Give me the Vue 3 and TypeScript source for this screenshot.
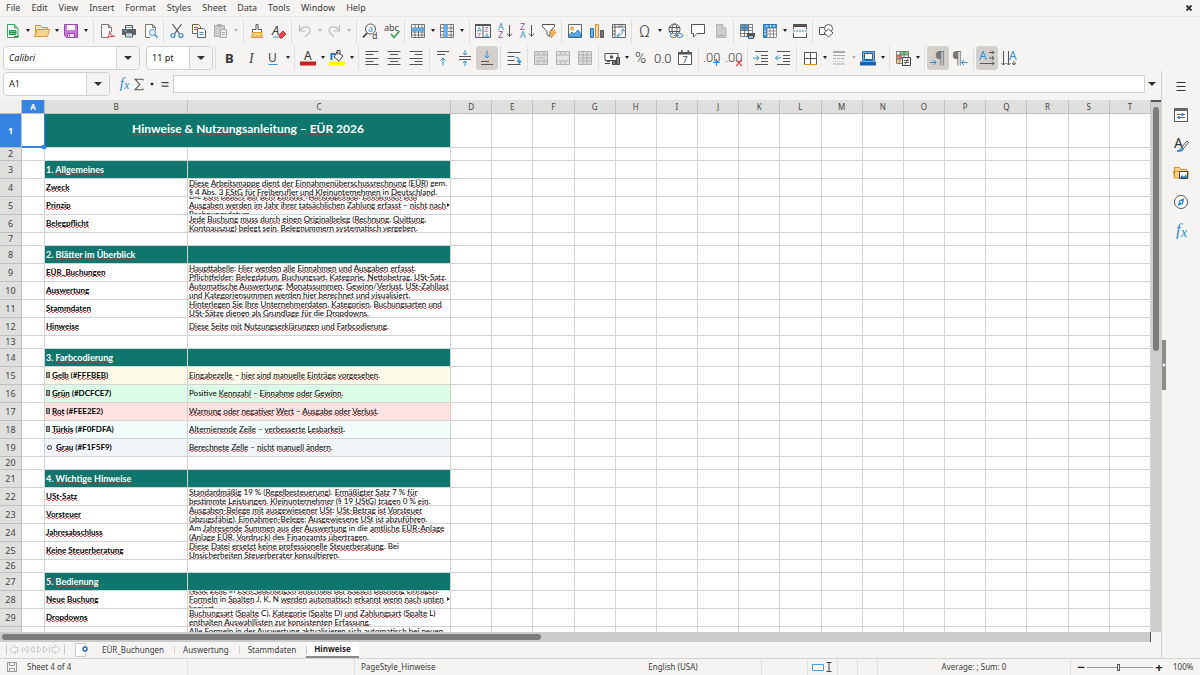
<script setup lang="ts">
import { ref } from 'vue'

interface Tool { id: string; label: string; drop?: boolean; on?: boolean; dim?: boolean }
interface Row {
  n: number
  kind: 'title' | 'gap' | 'section' | 'item'
  label?: string
  lines?: string[]
  tone?: string
  mark?: 'box' | 'ring'
  more?: boolean
}
interface Piece { text: string; bad: boolean }

const menus = ['File', 'Edit', 'View', 'Insert', 'Format', 'Styles', 'Sheet', 'Data', 'Tools', 'Window', 'Help']

const standardBar: Tool[][] = [
  [{ id: 'new', label: 'New', drop: true }, { id: 'open', label: 'Open', drop: true }, { id: 'save', label: 'Save', drop: true }],
  [{ id: 'pdf', label: 'Export as PDF' }, { id: 'print', label: 'Print' }, { id: 'preview', label: 'Print preview' }],
  [{ id: 'cut', label: 'Cut' }, { id: 'copy', label: 'Copy' }, { id: 'paste', label: 'Paste', drop: true, dim: true }],
  [{ id: 'brush', label: 'Clone formatting' }, { id: 'clear', label: 'Clear formatting' }],
  [{ id: 'undo', label: 'Undo', drop: true, dim: true }, { id: 'redo', label: 'Redo', drop: true, dim: true }],
  [{ id: 'find', label: 'Find and replace' }, { id: 'spell', label: 'Spelling' }],
  [{ id: 'row', label: 'Row', drop: true }, { id: 'column', label: 'Column', drop: true }],
  [{ id: 'sort', label: 'Sort' }, { id: 'asc', label: 'Sort ascending' }, { id: 'desc', label: 'Sort descending' }, { id: 'filter', label: 'AutoFilter' }],
  [{ id: 'image', label: 'Insert image' }, { id: 'chart', label: 'Insert chart' }, { id: 'pivot', label: 'Insert pivot table' }],
  [{ id: 'omega', label: 'Special character', drop: true }, { id: 'link', label: 'Hyperlink' }, { id: 'comment', label: 'Comment' }, { id: 'page', label: 'Headers and footers', dim: true }],
  [{ id: 'area', label: 'Print area' }, { id: 'freeze', label: 'Freeze rows and columns', drop: true }, { id: 'split', label: 'Split window' }],
  [{ id: 'shapes', label: 'Draw functions' }],
]

const formatBar: Tool[][] = [
  [{ id: 'bold', label: 'Bold' }, { id: 'italic', label: 'Italic' }, { id: 'underline', label: 'Underline', drop: true }],
  [{ id: 'fontcolor', label: 'Font color', drop: true }, { id: 'fill', label: 'Background color', drop: true }],
  [{ id: 'left', label: 'Align left' }, { id: 'center', label: 'Center horizontally' }, { id: 'right', label: 'Align right' }],
  [{ id: 'top', label: 'Align top' }, { id: 'middle', label: 'Center vertically' }, { id: 'bottom', label: 'Align bottom', on: true }],
  [{ id: 'wrap', label: 'Wrap text' }],
  [{ id: 'mergecenter', label: 'Merge and center', dim: true }, { id: 'merge', label: 'Merge cells', dim: true }, { id: 'unmerge', label: 'Unmerge cells', dim: true }],
  [{ id: 'currency', label: 'Format as currency', drop: true }, { id: 'percent', label: 'Format as percent' }, { id: 'number', label: 'Format as number' }, { id: 'date', label: 'Format as date' }],
  [{ id: 'adddec', label: 'Add decimal place' }, { id: 'deldec', label: 'Delete decimal place' }],
  [{ id: 'indent', label: 'Increase indent' }, { id: 'outdent', label: 'Decrease indent' }],
  [{ id: 'borders', label: 'Borders', drop: true }, { id: 'borderstyle', label: 'Border style', drop: true, dim: true }, { id: 'bordercolor', label: 'Border color', drop: true }],
  [{ id: 'conditional', label: 'Conditional formatting', drop: true }],
  [{ id: 'ltr', label: 'Left to right', on: true }, { id: 'rtl', label: 'Right to left' }],
  [{ id: 'horizontal', label: 'Text direction left to right', on: true }, { id: 'vertical', label: 'Text direction top to bottom' }],
]

const panels = [
  { id: 'menu', label: 'Sidebar settings' },
  { id: 'properties', label: 'Properties' },
  { id: 'styles', label: 'Styles' },
  { id: 'gallery', label: 'Gallery' },
  { id: 'navigator', label: 'Navigator' },
  { id: 'functions', label: 'Functions' },
]

const columns = 'DEFGHIJKLMNOPQRST'.split('')

const rows: Row[] = [
  { n: 1, kind: 'title', label: 'Hinweise & Nutzungsanleitung – EÜR 2026' },
  { n: 2, kind: 'gap' },
  { n: 3, kind: 'section', label: '1. Allgemeines' },
  { n: 4, kind: 'item', label: 'Zweck', lines: ['Diese Arbeitsmappe dient der Einnahmenüberschussrechnung (EÜR) gem.', '§ 4 Abs. 3 EStG für Freiberufler und Kleinunternehmen in Deutschland.'] },
  { n: 5, kind: 'item', label: 'Prinzip', more: true, lines: ['Die EÜR basiert auf dem Zufluss-/Abflussprinzip: Einnahmen und', 'Ausgaben werden im Jahr ihrer tatsächlichen Zahlung erfasst – nicht nach', 'Rechnungsdatum.'] },
  { n: 6, kind: 'item', label: 'Belegpflicht', lines: ['Jede Buchung muss durch einen Originalbeleg (Rechnung, Quittung,', 'Kontoauszug) belegt sein. Belegnummern systematisch vergeben.'] },
  { n: 7, kind: 'gap' },
  { n: 8, kind: 'section', label: '2. Blätter im Überblick' },
  { n: 9, kind: 'item', label: 'EÜR_Buchungen', lines: ['Haupttabelle: Hier werden alle Einnahmen und Ausgaben erfasst.', 'Pflichtfelder: Belegdatum, Buchungsart, Kategorie, Nettobetrag, USt-Satz.'] },
  { n: 10, kind: 'item', label: 'Auswertung', lines: ['Automatische Auswertung: Monatssummen, Gewinn/Verlust, USt-Zahllast', 'und Kategoriensummen werden hier berechnet und visualisiert.'] },
  { n: 11, kind: 'item', label: 'Stammdaten', lines: ['Hinterlegen Sie Ihre Unternehmerdaten, Kategorien, Buchungsarten und', 'USt-Sätze dienen als Grundlage für die Dropdowns.'] },
  { n: 12, kind: 'item', label: 'Hinweise', lines: ['Diese Seite mit Nutzungserklärungen und Farbcodierung.'] },
  { n: 13, kind: 'gap' },
  { n: 14, kind: 'section', label: '3. Farbcodierung' },
  { n: 15, kind: 'item', label: 'Gelb (#FFFBEB)', mark: 'box', tone: 'yellow', lines: ['Eingabezelle – hier sind manuelle Einträge vorgesehen.'] },
  { n: 16, kind: 'item', label: 'Grün (#DCFCE7)', mark: 'box', tone: 'green', lines: ['Positive Kennzahl – Einnahme oder Gewinn.'] },
  { n: 17, kind: 'item', label: 'Rot (#FEE2E2)', mark: 'box', tone: 'red', lines: ['Warnung oder negativer Wert – Ausgabe oder Verlust.'] },
  { n: 18, kind: 'item', label: 'Türkis (#F0FDFA)', mark: 'box', tone: 'mint', lines: ['Alternierende Zeile – verbesserte Lesbarkeit.'] },
  { n: 19, kind: 'item', label: 'Grau (#F1F5F9)', mark: 'ring', tone: 'grey', lines: ['Berechnete Zelle – nicht manuell ändern.'] },
  { n: 20, kind: 'gap' },
  { n: 21, kind: 'section', label: '4. Wichtige Hinweise' },
  { n: 22, kind: 'item', label: 'USt-Satz', lines: ['Standardmäßig 19 % (Regelbesteuerung). Ermäßigter Satz 7 % für', 'bestimmte Leistungen. Kleinunternehmer (§ 19 UStG) tragen 0 % ein.'] },
  { n: 23, kind: 'item', label: 'Vorsteuer', lines: ['Ausgaben-Belege mit ausgewiesener USt: USt-Betrag ist Vorsteuer', '(abzugsfähig). Einnahmen-Belege: Ausgewiesene USt ist abzuführen.'] },
  { n: 24, kind: 'item', label: 'Jahresabschluss', lines: ['Am Jahresende Summen aus der Auswertung in die amtliche EÜR-Anlage', '(Anlage EÜR, Vordruck) des Finanzamts übertragen.'] },
  { n: 25, kind: 'item', label: 'Keine Steuerberatung', lines: ['Diese Datei ersetzt keine professionelle Steuerberatung. Bei', 'Unsicherheiten Steuerberater konsultieren.'] },
  { n: 26, kind: 'gap' },
  { n: 27, kind: 'section', label: '5. Bedienung' },
  { n: 28, kind: 'item', label: 'Neue Buchung', more: true, lines: ['Neue Zeile in EÜR_Buchungen unterhalb der letzten Buchung einfügen.', 'Formeln in Spalten J, K, N werden automatisch erkannt wenn nach unten', 'kopiert.'] },
  { n: 29, kind: 'item', label: 'Dropdowns', lines: ['Buchungsart (Spalte C), Kategorie (Spalte D) und Zahlungsart (Spalte L)', 'enthalten Auswahllisten zur konsistenten Erfassung.'] },
  { n: 30, kind: 'item', lines: ['Alle Formeln in der Auswertung aktualisieren sich automatisch bei neuen', 'Buchungen.'] },
]

// Words the English dictionary accepts, so they carry no spelling mark.
const accepted = new Set(['in', 'die', 'Die', 'Am', 'Bei', 'Positive', 'Abs', 'des', 'J', 'K', 'N', 'C', 'D', 'L', 'gem'])

function pieces(text: string): Piece[] {
  return (text.match(/[\p{L}\p{N}_-]+|[^\p{L}\p{N}_-]+/gu) ?? []).map((part) => ({
    text: part,
    bad: /^\p{L}/u.test(part) && !/\d/.test(part) && !accepted.has(part),
  }))
}

const tabs = ['EÜR_Buchungen', 'Auswertung', 'Stammdaten', 'Hinweise']
const activeTab = ref('Hinweise')
const fontName = ref('Calibri')
const fontSize = ref('11 pt')
const cellName = ref('A1')
const formula = ref('')
const zoom = ref(48)
</script>

<template>
  <div class="app">
    <svg class="sprites" aria-hidden="true">
      <symbol id="i-new" viewBox="0 0 16 16"><path d="M2.500 1.500h7l3.500 3.500v9.500h-10.500z" fill="#fff" stroke="#3aa655" /><path d="M9.500 1.500v3.500h3.500" fill="#8fd3a0" stroke="#3aa655" /><path d="M4.500 7.500h6.500v4h-6.500z" fill="#7cc88d" stroke="#2f8f48" /><path d="M4.500 9.500h6.500M9 13.500h5" stroke="#2f8f48" /></symbol>
      <symbol id="i-open" viewBox="0 0 16 16"><path d="M1.500 13V2.500h5l1.500 2h5.500V6" fill="#fbe3ba" stroke="#d99030" /><path d="M.5 13.500 3 6.500h12.500L13.500 13.500z" fill="#fcd28c" stroke="#e09a38" /></symbol>
      <symbol id="i-save" viewBox="0 0 16 16"><path d="M1.500 1.500h13v13H3.500l-2-2z" fill="#c57bd4" stroke="#9a45ab" /><path d="M4 2h8v5H4z" fill="#fff" /><path d="M4.500 10.500h7v4h-7z" fill="#f2dff5" stroke="#9a45ab" /><path d="M6.500 11.500v2" stroke="#9a45ab" /></symbol>
      <symbol id="i-pdf" viewBox="0 0 16 16"><path d="M8 14.500H2.500v-13h7l3 3V9M9.500 1.500v3h3" fill="#fafafa" stroke="#777" /><path d="M8 15c2-2 3-4.500 2.500-7 .5 3 2 5 5 5.500-3-.5-5 0-7.500 1.500z" fill="none" stroke="#e0383c" /></symbol>
      <symbol id="i-print" viewBox="0 0 16 16"><path d="M4.500 6V2.500h7V6" fill="#fff" stroke="#555" /><path d="M1 6h14v6H1z" fill="#5d6265" /><path d="M4.500 10h7v4h-7z" fill="#fff" stroke="#555" /><path d="M3 8h3" stroke="#63b0e8" /><path d="M5.500 12h5M5 4.500h6" stroke="#63b0e8" /></symbol>
      <symbol id="i-preview" viewBox="0 0 16 16"><path d="M7 14.500H2.500v-13h7l3 3V7M9.500 1.500v3h3" fill="#fafafa" stroke="#777" /><circle cx="9.500" cy="9.500" r="3" fill="#e4f1fb" stroke="#3a93d6" /><path d="m11.500 11.500 3 3" stroke="#3a93d6" stroke-width="1.400" /></symbol>
      <symbol id="i-cut" viewBox="0 0 16 16"><path d="M3.500 1 10.500 11M12.500 1 5.500 11" stroke="#555" stroke-width="1.200" /><circle cx="4" cy="12.500" r="2" fill="none" stroke="#2f8fd6" stroke-width="1.200" /><circle cx="12" cy="12.500" r="2" fill="none" stroke="#2f8fd6" stroke-width="1.200" /></symbol>
      <symbol id="i-copy" viewBox="0 0 16 16"><path d="M1.500 1.500h6l2 2v7h-8z" fill="#fff" stroke="#666" /><path d="M6.500 5.500h6l2 2v7h-8z" fill="#fff" stroke="#666" /><path d="M3 4.500h4M3 6.500h3M8.500 9.500h4M8.500 11.500h4" stroke="#2f8fd6" /></symbol>
      <symbol id="i-paste" viewBox="0 0 16 16"><path d="M1.500 2.500h10v11h-10z" fill="#ccc" stroke="#aaa" /><path d="M4.500 1h4v3h-4z" fill="#aaa" /><path d="M7.500 6.500h6v8h-6z" fill="#eee" stroke="#aaa" /><path d="M9 9.500h3M9 11.500h3" stroke="#aaa" /></symbol>
      <symbol id="i-brush" viewBox="0 0 16 16"><path d="M7 1.500h2v5h3.500v3h-9v-3H7z" fill="#fff" stroke="#555" /><path d="M3.500 9.500h9l1 5h-11z" fill="#fcd28c" stroke="#e09a38" /><path d="M5 12v2M8 12v2M11 12v2" stroke="#e09a38" /></symbol>
      <symbol id="i-clear" viewBox="0 0 16 16"><text x="1" y="12" font-size="13" font-style="italic" fill="#444">A</text><path d="M2 14h6" stroke="#3a93d6" /><path d="m8 12 4-4 3 3-4 4h-2z" fill="#e5484d" stroke="#c6353a" /></symbol>
      <symbol id="i-undo" viewBox="0 0 16 16"><path d="M2.500 2v6h6M2.500 8C6 2 13 3 13 7.500c0 3-3 4-5 6.500" fill="none" stroke="#bdbdbd" stroke-width="1.200" /></symbol>
      <symbol id="i-redo" viewBox="0 0 16 16"><path d="M13.500 2v6h-6M13.500 8C10 2 3 3 3 7.500c0 3 3 4 5 6.500" fill="none" stroke="#bdbdbd" stroke-width="1.200" /></symbol>
      <symbol id="i-find" viewBox="0 0 16 16"><circle cx="8.500" cy="6" r="5" fill="#fff" stroke="#555" /><path d="M5 10 1 14.500" stroke="#444" stroke-width="1.800" /><text x="6" y="9" font-size="9" fill="#2f8fd6">a</text><text x="10" y="15.500" font-size="9" fill="#444">d</text></symbol>
      <symbol id="i-spell" viewBox="0 0 16 16"><text x="0" y="8" font-size="9" fill="#444">abc</text><path d="m7 11 3 3.500L15.500 8" fill="none" stroke="#35a355" stroke-width="1.600" /></symbol>
      <symbol id="i-row" viewBox="0 0 16 16"><path d="M1.500 1.500h13v13h-13zM1.500 5h13M1.500 9h13M1.500 12h13M5 1.500v13M8.500 1.500v13M12 1.500v13" fill="#fff" stroke="#555" stroke-width=".8" /><path d="M1.500 5h13v3.500h-13z" fill="#5aacea" /></symbol>
      <symbol id="i-column" viewBox="0 0 16 16"><path d="M1.500 1.500h13v13h-13zM1.500 5h13M1.500 8.500h13M1.500 12h13M5 1.500v13M8.500 1.500v13M12 1.500v13" fill="#fff" stroke="#555" stroke-width=".8" /><path d="M5 1.500h4v13H5z" fill="#69b3ea" /></symbol>
      <symbol id="i-sort" viewBox="0 0 16 16"><path d="M.5 1.500h15v13H.5zM8 2v12" fill="#fff" stroke="#555" /><path d="M0 1h16v2H0z" fill="#555" /><text x="2" y="8.500" font-size="7" fill="#2f8fd6">A</text><text x="2" y="14.500" font-size="7" fill="#a34bb5">Z</text><text x="9.500" y="8.500" font-size="7" fill="#a34bb5">Z</text><text x="9.500" y="14.500" font-size="7" fill="#2f8fd6">A</text></symbol>
      <symbol id="i-asc" viewBox="0 0 16 16"><text x="1" y="7" font-size="9" fill="#2f8fd6">A</text><text x="1" y="15" font-size="9" fill="#a34bb5">Z</text><path d="M12.500 2v11M10 10.500l2.500 3 2.500-3" fill="none" stroke="#555" /></symbol>
      <symbol id="i-desc" viewBox="0 0 16 16"><text x="1" y="7" font-size="9" fill="#a34bb5">Z</text><text x="1" y="15" font-size="9" fill="#2f8fd6">A</text><path d="M12.500 2v11M10 10.500l2.500 3 2.500-3" fill="none" stroke="#555" /></symbol>
      <symbol id="i-filter" viewBox="0 0 16 16"><path d="M1.500 1.500h12v2L9 8.500v5l-3 -2V8.500l-4.500-5z" fill="#fff" stroke="#555" /><path d="m11 7-2 4h2.500l-1.500 4 5-5.500h-2.500l1.500-2.500z" fill="#fbbf72" stroke="#e58a1f" stroke-width=".8" /></symbol>
      <symbol id="i-image" viewBox="0 0 16 16"><path d="M1.500 1.500h13v13h-13z" fill="#fff" stroke="#666" /><circle cx="5" cy="5.500" r="1.500" fill="#fcd28c" stroke="#e08a20" /><path d="m2 14 0-2 3-3 2 2 4-4 3 4v3z" fill="#5aa9e6" stroke="#2576b9" stroke-width=".8" /></symbol>
      <symbol id="i-chart" viewBox="0 0 16 16"><path d="M1.500 5.500h3v9h-3z" fill="#69b3ea" stroke="#2576b9" /><path d="M6.500 1.500h3v13h-3z" fill="#fcd9a4" stroke="#e58a1f" /><path d="M11.500 7.500h3v7h-3z" fill="#777" stroke="#555" /></symbol>
      <symbol id="i-pivot" viewBox="0 0 16 16"><path d="M1.500 1.500h13v13h-13zM1.500 4h13M4 1.500v13M8 1.500v3M11 1.500v3M1.500 8h3M1.500 11h3" fill="#fff" stroke="#666" /><path d="M6 12.500c4 0 6-2 6-6M10 8.500l2-2.500 2 2.500M8.500 10l-2.500 2.500 2.500 2" fill="none" stroke="#2f8fd6" /></symbol>
      <symbol id="i-omega" viewBox="0 0 16 16"><text x="2" y="14" font-size="17" class="thin" fill="#444">Ω</text></symbol>
      <symbol id="i-link" viewBox="0 0 16 16"><circle cx="7.500" cy="6.500" r="5.500" fill="#fff" stroke="#555" /><ellipse cx="7.500" cy="6.500" rx="2.500" ry="5.500" fill="none" stroke="#555" /><path d="M2 4.500h11M2 8.500h11" stroke="#555" /><rect x="3.500" y="10.500" width="6" height="4" rx="2" fill="#f5f4f2" stroke="#2f8fd6" /><rect x="9.500" y="10.500" width="6" height="4" rx="2" fill="#f5f4f2" stroke="#2f8fd6" /><path d="M7 12.500h5" stroke="#2f8fd6" /></symbol>
      <symbol id="i-comment" viewBox="0 0 16 16"><path d="M1.500 1.500h13v9H7L3.500 14v-3.500h-2z" fill="#fff" stroke="#555" /></symbol>
      <symbol id="i-page" viewBox="0 0 16 16"><path d="M3.500 1.500h6l3.500 3.500v9.500H3.500z" fill="#ccc" stroke="#b5b5b5" /><path d="M9.500 1.500v3.500H13" fill="#eee" stroke="#b5b5b5" /><path d="M5 12.500h6" stroke="#aaa" /></symbol>
      <symbol id="i-area" viewBox="0 0 16 16"><path d="M1.500 1.500h12v12h-12z" fill="#fff" /><path d="M2 1.500h8v6H2z" fill="#4b9fe0" /><path d="M1.500 1.500h12v12h-12zM1.500 4.500h12M1.500 7.500h12M1.500 10.500h12M5.500 1.500v12M9.500 1.500v12" fill="none" stroke="#666" stroke-width=".8" /><path d="M8 10h8v4H8z" fill="#555" /><path d="M9.500 12.500h5v3h-5z" fill="#8cc7f2" stroke="#555" /></symbol>
      <symbol id="i-freeze" viewBox="0 0 16 16"><path d="M5 5h9.500v9.500H5zM5 8h9.500M5 11h9.500M8 5v9.500M11.500 5v9.500" fill="#fff" stroke="#777" stroke-width=".8" /><path d="M1.500 1.500h13v3h-10v10h-3z" fill="#4b9fe0" stroke="#2576b9" /><path d="M5 2v2.500M8.500 2v2.500M12 2v2.500M2 8h2.500M2 11h2.500" stroke="#d8ecfa" /></symbol>
      <symbol id="i-split" viewBox="0 0 16 16"><path d="M1.500 6V1.500h13V6M1.500 10v4.500h13V10" fill="#fff" stroke="#555" /><path d="M1 1h14v3H1z" fill="#555" /><path d="M1 8h14" stroke="#2f8fd6" stroke-dasharray="2 1" /></symbol>
      <symbol id="i-shapes" viewBox="0 0 16 16"><path d="M1.500 4.500h8v7h-8z" fill="#fff" stroke="#555" /><circle cx="10.500" cy="5.500" r="4" fill="#fff" stroke="#555" /><path d="m10.500 6 4.500 4-4.500 4L6 10z" fill="#fff" stroke="#555" /></symbol>

      <symbol id="i-bold" viewBox="0 0 16 16"><text x="4" y="13" font-size="13" font-weight="700" fill="#333">B</text></symbol>
      <symbol id="i-italic" viewBox="0 0 16 16"><text x="6" y="13" font-size="14" font-style="italic" class="serif" fill="#444">I</text></symbol>
      <symbol id="i-underline" viewBox="0 0 16 16"><text x="3" y="12" font-size="12" fill="#444">U</text><path d="M3.500 14.500h9" stroke="#3a8fe0" /></symbol>
      <symbol id="i-fontcolor" viewBox="0 0 16 16"><text x="4" y="10" font-size="12" fill="#333">A</text><path d="M0 11.500h16v4H0z" fill="#c9211e" /></symbol>
      <symbol id="i-fill" viewBox="0 0 16 16"><path d="m8 2 6 4-4 5-5-4z" fill="#fff" stroke="#444" /><path d="M8 5V.5h3v4" fill="none" stroke="#444" /><path d="M2.500 10V4h4" fill="none" stroke="#2576b9" stroke-width="2" /><path d="M0 11.500h16v4H0z" fill="#ffff00" /></symbol>
      <symbol id="i-left" viewBox="0 0 16 16"><path d="M1.500 1.500h13M1.500 4.500h8M1.500 8.500h13M1.500 11.500h8M1.500 14.500h13" stroke="#555" /></symbol>
      <symbol id="i-center" viewBox="0 0 16 16"><path d="M1.500 1.500h13M4 4.500h8M1.500 8.500h13M4 11.500h8M1.500 14.500h13" stroke="#555" /></symbol>
      <symbol id="i-right" viewBox="0 0 16 16"><path d="M1.500 1.500h13M6.500 4.500h8M1.500 8.500h13M6.500 11.500h8M1.500 14.500h13" stroke="#555" /></symbol>
      <symbol id="i-top" viewBox="0 0 16 16"><path d="M2 1.500h12M2 4.500h8" stroke="#555" /><path d="M8 15.500V8M5.500 10.500 8 8l2.500 2.500" fill="none" stroke="#2f8fd6" /></symbol>
      <symbol id="i-middle" viewBox="0 0 16 16"><path d="M2 6.500h12M2 9.500h12" stroke="#555" /><path d="M8 0v5M6 3l2 2 2-2M8 16v-5M6 13l2-2 2 2" fill="none" stroke="#2f8fd6" /></symbol>
      <symbol id="i-bottom" viewBox="0 0 16 16"><path d="M2 11.500h8M2 14.500h12" stroke="#555" /><path d="M8 .5V8M5.500 5.500 8 8l2.500-2.500" fill="none" stroke="#2f8fd6" /></symbol>
      <symbol id="i-wrap" viewBox="0 0 16 16"><path d="M1.500 2.500h13M1.500 6.500h7M1.500 10.500h7M1.500 14.500h13" stroke="#555" /><path d="M9.500 7c3 0 4 1.500 4 5.500M11 10.500l2.500 2.500 2-2.500" fill="none" stroke="#2f8fd6" stroke-width="1.200" /></symbol>
      <symbol id="i-mergecenter" viewBox="0 0 16 16"><path d="M1.500 1.500h13v13h-13zM1.500 5h13M1.500 11h13M5 1.500V5M11 1.500V5M5 11v3.500M11 11v3.500M4 8h8" fill="#ddd" stroke="#b0b0b0" /></symbol>
      <symbol id="i-merge" viewBox="0 0 16 16"><path d="M1.500 1.500h13v13h-13zM1.500 5h13M1.500 11h13M6 1.500V5M10 1.500V5M6 11v3.500M10 11v3.500" fill="#e4e4e4" stroke="#b0b0b0" /></symbol>
      <symbol id="i-unmerge" viewBox="0 0 16 16"><path d="M1.500 1.500h13v13h-13zM1.500 5h13M1.500 11h13M6 1.500v13M10 1.500v13M1.500 8h13" fill="#ddd" stroke="#b0b0b0" /></symbol>
      <symbol id="i-currency" viewBox="0 0 16 16"><path d="M1 3.500h13v7H1z" fill="#fff" stroke="#555" /><circle cx="7.500" cy="7" r="1.800" fill="#555" /><path d="M8.500 10.500h3v4h-3zM12.500 7.500h3v7h-3z" fill="#888" stroke="#444" /><path d="M1 13.500h5M3 11.500h3" stroke="#444" /></symbol>
      <symbol id="i-percent" viewBox="0 0 16 16"><text x="2" y="13" font-size="15" class="thin" fill="#333">%</text></symbol>
      <symbol id="i-number" viewBox="0 0 16 16"><text x="-1" y="13" font-size="13" class="thin" fill="#333">0.0</text></symbol>
      <symbol id="i-date" viewBox="0 0 16 16"><path d="M1.500 2.500h13v12h-13z" fill="#fff" stroke="#555" /><path d="M1 2h14v2.500H1zM4 0h1.500v3H4zM10.500 0H12v3h-1.500z" fill="#555" /><text x="5.500" y="13" font-size="9" fill="#444">7</text></symbol>
      <symbol id="i-adddec" viewBox="0 0 16 16"><text x="-1" y="12" font-size="13" class="thin" fill="#444">.00</text><path d="M12.500 9v7M9 12.500h7" stroke="#2f8fd6" stroke-width="1.200" /></symbol>
      <symbol id="i-deldec" viewBox="0 0 16 16"><text x="-1" y="12" font-size="13" class="thin" fill="#444">.00</text><path d="m10 10 6 6M16 10l-6 6" stroke="#e5484d" stroke-width="1.200" /></symbol>
      <symbol id="i-indent" viewBox="0 0 16 16"><path d="M2 1.500h13M8 5.500h7M8 8.500h7M8 11.500h7M2 14.500h13" stroke="#555" /><path d="M0 8h6M3.500 5.500 6 8l-2.500 2.500" fill="none" stroke="#2f8fd6" /></symbol>
      <symbol id="i-outdent" viewBox="0 0 16 16"><path d="M2 1.500h13M8 5.500h7M8 8.500h7M8 11.500h7M2 14.500h13" stroke="#555" /><path d="M6 8H.5M3 5.500.5 8 3 10.500" fill="none" stroke="#2f8fd6" /></symbol>
      <symbol id="i-borders" viewBox="0 0 16 16"><path d="M2.500 14V2.500h12V14M8.500 2.500v12M2.500 8.500h12" fill="#fff" stroke="#555" /><path d="M2 14.500h13" stroke="#e58a1f" /></symbol>
      <symbol id="i-borderstyle" viewBox="0 0 16 16"><path d="M2 2h12" stroke="#aaa" stroke-width="2" /><path d="M2 5.500h12" stroke="#aaa" /><path d="M2 8.500h12" stroke="#aaa" stroke-dasharray="3 1" /><path d="M2 11.500h12" stroke="#bbb" stroke-dasharray="1 1" /><path d="M2 14h12" stroke="#aaa" /></symbol>
      <symbol id="i-bordercolor" viewBox="0 0 16 16"><path d="M2.500 1.500h12v9h-12z" fill="#69b3ea" stroke="#2576b9" /><path d="M4.500 3.500h8v6h-8z" fill="#fff" stroke="#555" /><path d="M0 11.500h16v4H0z" fill="#1f62a8" /></symbol>
      <symbol id="i-conditional" viewBox="0 0 16 16"><path d="M1.500 1.500h12v12h-12z" fill="#fff" /><path d="M5 1.500h8.500V5H5z" fill="#78cc88" /><path d="M1.500 5H7v4H1.500z" fill="#ef7b7e" /><path d="M1.500 9H5v4H1.500z" fill="#fbc98a" /><path d="M1.500 1.500h12v12h-12zM1.500 5h12M1.500 9h12M5 1.500v12M9 1.500v12" fill="none" stroke="#666" stroke-width=".8" /><path d="M7.500 7.500h8v8h-8z" fill="#fff" stroke="#444" /><path d="M9 10.500h5M9 12.500h5M13 8.500l-3 6" stroke="#444" stroke-width=".8" /></symbol>
      <symbol id="i-ltr" viewBox="0 0 16 16"><text x="5" y="13" font-size="16" fill="#777">¶</text><path d="M0 12.500h6M3.500 10 6 12.500 3.500 15" fill="none" stroke="#2f8fd6" /></symbol>
      <symbol id="i-rtl" viewBox="0 0 16 16"><text x="0" y="13" font-size="16" fill="#777">¶</text><path d="M15.500 12.500h-6M12 10l-2.500 2.500L12 15" fill="none" stroke="#2f8fd6" /></symbol>
      <symbol id="i-horizontal" viewBox="0 0 16 16"><text x="0" y="9.500" font-size="12" fill="#2f8fd6">A</text><path d="M10 2.500h5M13 .5l2 2-2 2M10 8h5M13 6l2 2-2 2M1 13.500h14M13 11.500l2 2-2 2" fill="none" stroke="#555" /></symbol>
      <symbol id="i-vertical" viewBox="0 0 16 16"><text x="8" y="10" font-size="12" fill="#2f8fd6">A</text><path d="M2.500 1v14M.5 13l2 2 2-2M7.500 1v14M5.500 13l2 2 2-2M13 11v4M11 13l2 2 2-2" fill="none" stroke="#555" /></symbol>

      <symbol id="i-menu" viewBox="0 0 16 16"><path d="M3.500 4.500h9M3.500 8.500h9M3.500 12.500h9" stroke="#333" stroke-width="1.200" /></symbol>
      <symbol id="i-properties" viewBox="0 0 16 16"><path d="M1.500 1.500h13v13h-13z" fill="#fff" stroke="#555" /><path d="M1 1h14v3H1z" fill="#666" /><path d="M4 7.500h8M4 10.500h8" stroke="#666" /><path d="M9.500 6v3M6 9v3" stroke="#2f8fd6" stroke-width="1.600" /></symbol>
      <symbol id="i-styles" viewBox="0 0 16 16"><text x="1" y="12" font-size="14" fill="#333">A</text><path d="m9 11 5-6 1.500 1.500-5 6z" fill="#fff" stroke="#555" /><path d="M4 15c4 0 3-4 6-3 1 1 0 4-6 3z" fill="#5aa9e6" stroke="#2576b9" /></symbol>
      <symbol id="i-gallery" viewBox="0 0 16 16"><path d="M1.500 13V2.500h5l1.500 2h5.500V6M1.500 13l-1-6.500h15L15 13z" fill="#fcd28c" stroke="#e08a20" /><path d="M6.500 6.500h8v7h-8z" fill="#fff" stroke="#444" /><path d="m7 13 2-3 2 2 2-3 1 4z" fill="#2576b9" /></symbol>
      <symbol id="i-navigator" viewBox="0 0 16 16"><circle cx="8" cy="8" r="6.500" fill="#fff" stroke="#555" /><path d="m11.500 4-1.500 6-5.500 2 2-6z" fill="#2f8fd6" /><circle cx="8" cy="8" r="1" fill="#fff" /></symbol>
      <symbol id="i-functions" viewBox="0 0 16 16"><text x="3" y="12" font-size="17" font-style="italic" class="serif" fill="#2f8fd6">f</text><text x="8" y="14" font-size="14" font-style="italic" class="serif" fill="#2f8fd6">x</text></symbol>
      <symbol id="i-sum" viewBox="0 0 16 16"><path d="M12.500 4V2.500h-9L9 8.500l-5.500 6h9V13" fill="none" stroke="#555" stroke-width="1.200" /></symbol>
      <symbol id="i-equals" viewBox="0 0 16 16"><path d="M4 6.500h8M4 10.500h8" stroke="#444" stroke-width="1.500" /></symbol>
    </svg>

    <nav class="menubar" aria-label="Main menu">
      <button v-for="m in menus" :key="m" type="button">{{ m }}</button>
      <button class="close" type="button" aria-label="Close document">
        <svg viewBox="0 0 8 8"><path d="m1.500 1.500 5 5m0-5-5 5" stroke="#333" stroke-width="1.800" /></svg>
      </button>
    </nav>

    <div class="toolbar standard" role="toolbar" aria-label="Standard">
      <div v-for="(group, g) in standardBar" :key="g" class="group" :class="{ roomy: g === 9 || g === 10 }">
        <div v-for="t in group" :key="t.id" class="tool">
          <button class="icon" :class="{ on: t.on }" type="button" :aria-label="t.label"><svg><use :href="'#i-' + t.id" /></svg></button>
          <button v-if="t.drop" class="arrow" :class="{ dim: t.dim }" type="button" :aria-label="t.label + ' options'"></button>
        </div>
      </div>
    </div>

    <div class="toolbar format" role="toolbar" aria-label="Formatting">
      <div class="combo font">
        <input v-model="fontName" aria-label="Font name" />
        <button type="button" aria-label="Show fonts"></button>
      </div>
      <div class="combo size">
        <input v-model="fontSize" aria-label="Font size" />
        <button type="button" aria-label="Show sizes"></button>
      </div>
      <div v-for="(group, g) in formatBar" :key="g" class="group">
        <div v-for="t in group" :key="t.id" class="tool">
          <button class="icon" :class="{ on: t.on }" type="button" :aria-label="t.label"><svg><use :href="'#i-' + t.id" /></svg></button>
          <button v-if="t.drop" class="arrow" :class="{ dim: t.dim }" type="button" :aria-label="t.label + ' options'"></button>
        </div>
      </div>
    </div>

    <div class="body">
      <main class="workspace">
        <div class="formulabar">
          <div class="combo name">
            <input v-model="cellName" aria-label="Name box" />
            <button type="button" aria-label="Show names"></button>
          </div>
          <button class="fn first" type="button" aria-label="Function wizard"><svg><use href="#i-functions" /></svg></button>
          <button class="fn" type="button" aria-label="Select function"><svg><use href="#i-sum" /></svg></button>
          <button class="arrow" type="button" aria-label="Function list"></button>
          <button class="fn" type="button" aria-label="Formula"><svg><use href="#i-equals" /></svg></button>
          <input v-model="formula" class="formula" aria-label="Input line" />
          <button class="expand" type="button" aria-label="Expand formula bar"></button>
        </div>

        <div class="viewport">
          <div class="sheet">
            <table aria-label="Hinweise">
              <colgroup>
                <col class="c-num" /><col class="c-a" /><col class="c-b" /><col class="c-c" /><col v-for="c in columns" :key="c" />
              </colgroup>
              <thead>
                <tr>
                  <th class="corner"></th>
                  <th class="active" scope="col">A</th>
                  <th scope="col">B</th>
                  <th scope="col">C</th>
                  <th v-for="c in columns" :key="c" scope="col">{{ c }}</th>
                </tr>
              </thead>
              <tbody>
                <tr v-for="r in rows" :key="r.n" :class="[r.kind, r.tone]">
                  <th scope="row" :class="{ active: r.n === 1 }">{{ r.n < 30 ? r.n : '' }}</th>
                  <td :class="{ cursor: r.n === 1 }"></td>
                  <td v-if="r.kind === 'title'" colspan="2" class="fillcell">
                    <div class="cell"><p><span v-for="(p, i) in pieces(r.label ?? '')" :key="i" :class="{ bad: p.bad }">{{ p.text }}</span></p></div>
                  </td>
                  <template v-else>
                    <td class="fillcell">
                      <div class="cell label">
                        <p v-if="r.label"><i v-if="r.mark" :class="r.mark"></i><span v-for="(p, i) in pieces(r.label)" :key="i" :class="{ bad: p.bad }">{{ p.text }}</span></p>
                      </div>
                    </td>
                    <td class="fillcell">
                      <div class="cell" :class="{ more: r.more }">
                        <p v-for="(line, k) in r.lines ?? []" :key="k"><span v-for="(p, i) in pieces(line)" :key="i" :class="{ bad: p.bad }">{{ p.text }}</span></p>
                      </div>
                    </td>
                  </template>
                  <td v-for="c in columns" :key="c"></td>
                </tr>
              </tbody>
            </table>
          </div>
          <div class="vscroll"><div class="thumb"></div></div>
        </div>

        <div class="hscroll"><div class="thumb"></div></div>

        <div class="tabs">
          <div class="pager" aria-hidden="true">
            <svg viewBox="0 0 62 12"><path d="M1.500 1v10M10 1.500 4.500 6l5.500 4.500V8h3V4h-3zM17.500 3v6M23 3l-4 3 4 3zM29 3l-4 3 4 3zM32.500 3l4 3-4 3zM38.500 3l4 3-4 3zM44.500 3v6M50 1.500 55.500 6 50 10.500V8h-3V4h3zM59.500 1v10" fill="#f8f8f7" stroke="#c9c9c7" /></svg>
          </div>
          <button class="add" type="button" aria-label="Add sheet">
            <svg viewBox="0 0 16 16"><path d="M1.500 1.500h10v13h-10z" fill="#fff" stroke="#ccc" /><circle cx="11" cy="7" r="2" fill="#fff" stroke="#2a66b8" stroke-width="1.500" /></svg>
          </button>
          <button v-for="t in tabs" :key="t" class="tab" :class="{ current: t === activeTab }" type="button" @click="activeTab = t">{{ t }}</button>
        </div>
      </main>

      <aside class="sidebar">
        <button class="handle" type="button" aria-label="Hide sidebar"></button>
        <div class="panels">
          <button v-for="p in panels" :key="p.id" type="button" :aria-label="p.label"><svg><use :href="'#i-' + p.id" /></svg></button>
        </div>
      </aside>
    </div>

    <footer class="status">
      <div class="sheetno">
        <svg viewBox="0 0 12 12"><path d="M1.500 1.500h9v9h-9zM3.500 1.500v3h5v-3M3.500 10.500v-3h5v3" fill="none" stroke="#999" /></svg>
        <span>Sheet 4 of 4</span>
      </div>
      <div></div>
      <div class="pagestyle">PageStyle_Hinweise</div>
      <div class="mid">English (USA)</div>
      <div></div>
      <div class="mode">
        <svg viewBox="0 0 24 12"><path d="M1.500 3.500h11v6h-11z" fill="#fff" stroke="#4a9ed8" /><path d="M15.500 1.500h5M15.500 10.500h5M18 1.500v9" stroke="#444" /></svg>
      </div>
      <div></div>
      <div></div>
      <div class="mid">Average: ; Sum: 0</div>
      <div class="zoom">
        <button type="button" aria-label="Zoom out">−</button>
        <input v-model="zoom" type="range" min="0" max="100" aria-label="Zoom" />
        <button type="button" aria-label="Zoom in">+</button>
        <span>100%</span>
      </div>
    </footer>
  </div>
</template>

<style>
html, body { margin: 0; background: #f5f4f2; }
</style>

<style scoped>
.app { display: flex; flex-direction: column; height: 100vh; overflow: hidden; background: #f5f4f2; color: #3c3c3c; font: 8px/12px "Noto Sans", sans-serif; }
.app * { box-sizing: border-box; }
button, input { margin: 0; padding: 0; border: 0; background: none; color: inherit; font: inherit; }
svg { display: block; width: 16px; height: 16px; fill: none; overflow: visible; }
symbol { overflow: visible; }
.sprites { display: none; }
.serif { font-family: "Liberation Serif", serif; }
.thin { font-family: Roboto, sans-serif; font-weight: 300; }

.menubar { display: flex; align-items: center; gap: 11px; flex: none; height: 17px; padding: 0 6px; border-bottom: 1px solid #e9e8e6; font-size: 9px; }
.close { margin-left: auto; }
.close svg { width: 10px; height: 8px; }

.toolbar { display: flex; align-items: center; flex: none; height: 27px; }
.standard { padding-left: 2px; }
.format { padding-left: 3px; }
.group, .tool { display: flex; align-items: center; }
.roomy { gap: 1px; }
.standard .group + .group { margin-left: 1px; border-left: 1px solid #e0dfdd; padding-left: 2px; }
.format .group { border-left: 1px solid #e0dfdd; margin-left: 2px; padding-left: 2px; }
.standard .group:has(.tool:last-child .arrow) { padding-right: 3px; }
.format .group:has(.tool:last-child .arrow) { padding-right: 1px; }
.icon { display: grid; place-items: center; width: 22px; height: 24px; border-radius: 3px; }
.icon.on { background: #d3d0cc; }
.arrow { display: grid; place-items: center; width: 7px; height: 24px; }
.arrow::after, .combo button::after, .expand::after { content: ""; border: 2px solid transparent; border-top: 3px solid #222; border-bottom: 0; }
.arrow.dim::after { border-top-color: #b5b5b5; }
.combo { display: flex; height: 24px; border: 1px solid #d2cfcb; border-radius: 4px; overflow: hidden; background: #fff; color: #222; }
.combo input { flex: 1; min-width: 0; padding-left: 5px; font-size: 9px; outline: 0; }
.combo button { display: grid; place-items: center; width: 23px; border-left: 1px solid #d8d5d2; background: #f5f4f2; }
.combo button::after, .expand::after { border-width: 4px 4px 0; border-top-color: #333; }
.font { width: 137px; margin-right: 6px; }
.font input { font-style: italic; }
.size { width: 67px; }

.body { display: flex; flex: 1; min-height: 0; }
.workspace { display: flex; flex-direction: column; flex: 1; min-width: 0; }
.formulabar { display: flex; align-items: center; flex: none; height: 29px; padding: 0 3px 3px; }
.name { width: 107px; }
.fn { display: grid; place-items: center; width: 15px; height: 22px; }
.first { margin-left: 6px; }
.fn svg { width: 14px; height: 14px; }
.formulabar .arrow { width: 11px; }
.formula { flex: 1; min-width: 0; height: 18px; margin-left: 1px; border: 1px solid #d2d0cd; background: #fff; outline: 0; }
.expand { display: grid; place-items: center; width: 13px; height: 18px; }

.viewport { display: flex; flex: 1; min-height: 0; }
.sheet { flex: 1; min-width: 0; overflow: hidden; background: #fff; }
table { width: 100%; table-layout: fixed; border-spacing: 0; }
.c-num { width: 22px; } .c-a { width: 23px; } .c-b { width: 143px; } .c-c { width: 263px; }
th, td { height: 18px; padding: 0; border: 0 solid #d2d3d3; border-width: 0 1px 1px 0; }
th { border-color: #bfbfbd; background: #dfdfdd; font-weight: 400; font-size: 9px; color: #444; line-height: 12px; }
thead th { height: 14px; font-size: 8px; }
thead .corner { background: #f0efed; }
th.active { background: #3584e4; color: #fff; font-weight: 700; }
.title th, .title td { height: 34px; }
.gap th, .gap td { height: 13px; }
.cursor { position: relative; border-right-color: #3584e4; border-bottom: 2px solid #3584e4; }
.cursor::after { content: ""; position: absolute; right: -2px; bottom: -3px; z-index: 1; width: 4px; height: 4px; background: #3584e4; }
.cell { position: relative; display: flex; flex-direction: column; justify-content: center; height: 17px; padding-left: 1px; overflow: hidden; font: 8px/9px Lato, "Noto Sans", sans-serif; color: #000; white-space: pre; }
.gap .cell { height: 12px; }
.cell p { flex: none; margin: 0; }
.label { font-weight: 700; }
.title .cell { height: 33px; align-items: center; padding-bottom: 3px; font-weight: 700; font-size: 12px; line-height: 16px; color: #fff; }
.title .fillcell, .section .fillcell { background: #0f766e; }
.section .cell { font-weight: 700; font-size: 9px; color: #fff; }
.bad {
  --mark: rgb(222 40 40 / 80%);
  background-image: linear-gradient(to right, var(--mark) 50%, transparent 50%), linear-gradient(to right, transparent 50%, var(--mark) 50%);
  background-size: 4px 1px;
  background-repeat: repeat-x;
  background-position: left bottom 1px, left bottom;
}
.yellow .fillcell { background: #fffbeb; }
.green .fillcell { background: #dcfce7; }
.red .fillcell { background: #fee2e2; }
.mint .fillcell { background: #f0fdfa; }
.grey .fillcell { background: #f1f5f9; }
.box { display: inline-block; width: 4px; height: 6px; margin: 0 2px 1px 0; border: 1px solid #555; background: #999; vertical-align: middle; }
.ring { display: inline-block; width: 5px; height: 5px; margin: 0 4px 1px 1px; border: 1px solid #222; border-radius: 50%; vertical-align: middle; }
.more::after { content: ""; position: absolute; top: 6px; right: 0; border: 2px solid transparent; border-left: 3px solid #333; border-right: 0; }

.vscroll { width: 10px; padding: 5px 2px; background: #cecece; border-top: 2px solid #555; }
.vscroll .thumb { width: 6px; height: 47%; border-radius: 3px; background: #7c7c7c; }
.hscroll { flex: none; height: 10px; padding: 2px; margin-right: 10px; background: #cbcbcb; border-right: 1px solid #555; }
.hscroll .thumb { width: 47%; height: 6px; border-radius: 3px; background: #7c7c7c; }

.tabs { display: flex; align-items: stretch; flex: none; height: 16px; padding-left: 5px; }
.pager svg { width: 62px; height: 15px; }
.add { margin: 0 3px 0 7px; width: 16px; }
.tab { position: relative; padding: 0 10px 0 9px; }
.tab + .tab::before { content: ""; position: absolute; left: 0; top: 4px; height: 8px; border-left: 1px solid #cfcecc; }
.tab.current { padding: 0 8px; background: #fff; border-bottom: 2px solid #8a8a88; font-weight: 700; color: #222; }

.sidebar { display: flex; align-items: center; flex: none; width: 39px; border-left: 1px solid #cfcecb; }
.handle { display: grid; place-items: center; width: 4px; height: 50px; background: #8c8c8a; }
.handle::after { content: ""; border: 2px solid transparent; border-left: 3px solid #fff; border-right: 0; }
.panels { display: flex; flex-direction: column; align-items: center; gap: 13px; align-self: stretch; flex: 1; padding: 7px 4px 0 0; }

.status { display: grid; grid-template-columns: 188fr 167fr 230fr 177fr 46fr 30fr 20fr 20fr 193fr 129px; flex: none; height: 17px; border-top: 1px solid #d4d3d0; line-height: 16px; white-space: nowrap; }
.status > div { border-right: 1px solid #e2e1df; }
.sheetno { display: flex; align-items: center; gap: 9px; padding-left: 6px; }
.sheetno svg { width: 12px; height: 12px; }
.status .pagestyle { padding-left: 6px; border: 0; }
.mid { text-align: center; }
.mode { display: grid; place-items: center; }
.mode svg { width: 24px; height: 12px; }
.status .zoom { display: flex; align-items: center; padding-left: 4px; border: 0; }
.zoom button { width: 12px; color: #222; font-size: 13px; font-weight: 700; }
.zoom input { appearance: none; width: 66px; height: 10px; background: linear-gradient(#999, #999) center / 100% 1px no-repeat; }
.zoom input::-webkit-slider-thumb { appearance: none; width: 3px; height: 7px; border: 1px solid #555; background: #eee; }
.zoom span { margin-left: 8px; }
</style>
